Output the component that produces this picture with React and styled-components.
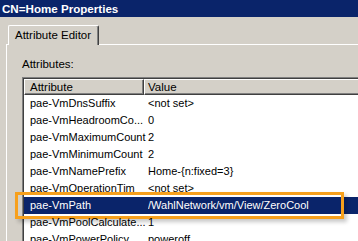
import React from "react";
import styled, { createGlobalStyle } from "styled-components";

const Global = createGlobalStyle`
  html, body {
    margin: 0;
    padding: 0;
    width: 358px;
    height: 241px;
    overflow: hidden;
    background: #d4d0c8;
  }
  * { box-sizing: border-box; }
`;

const Window = styled.div`
  width: 358px;
  height: 241px;
  overflow: hidden;
  background: #d4d0c8;
  font-family: "Liberation Sans", Arial, sans-serif;
  font-size: 11.5px;
  color: #000;
`;

const TitleBar = styled.div`
  height: 17px;
  background: #0a246a;
  color: #fff;
  font-weight: bold;
  font-size: 11.6px;
  line-height: 17px;
  padding-left: 2px;
  white-space: nowrap;
`;

const Body = styled.div`
  padding-top: 8px;
  padding-left: 6px;
`;

const TabStrip = styled.div`
  display: flex;
  padding-left: 2px;
`;

const Tab = styled.div`
  height: 20px;
  border-top: 1px solid #fff;
  border-left: 1px solid #fff;
  border-right: 1px solid #404040;
  box-shadow: inset -1px 0 0 #808080;
  border-top-left-radius: 2px;
  border-top-right-radius: 2px;
  padding: 0 7px 0 6px;
  line-height: 19px;
  white-space: nowrap;
  margin-bottom: -1px;
  background: #d4d0c8;
  position: relative;
  z-index: 1;
`;

const Panel = styled.div`
  width: 420px;
  height: 220px;
  border-top: 1px solid #fff;
  border-left: 1px solid #fff;
  padding: 13px 0 0 15px;
`;

const Label = styled.div`
  line-height: 13px;
  height: 13px;
  margin-bottom: 6px;
`;

const List = styled.div`
  border-top: 1px solid #808080;
  border-left: 1px solid #808080;
  box-shadow: inset 1px 1px 0 #404040;
  padding: 1px 0 0 1px;
  background: #fff;
  height: 200px;
  font-size: 11px;
`;

const Header = styled.div`
  display: flex;
  height: 16px;
  font-size: 11.5px;
`;

const HeaderCell = styled.div`
  width: ${(p) => p.$w};
  flex: ${(p) => (p.$grow ? "1" : "none")};
  background: #d4d0c8;
  border-top: 1px solid #fff;
  border-left: 1px solid #fff;
  border-bottom: 1px solid #404040;
  border-right: 1px solid #404040;
  box-shadow: inset -1px -1px 0 #808080;
  padding-left: ${(p) => p.$pad};
  line-height: 14px;
  white-space: nowrap;
`;

const Row = styled.div`
  position: relative;
  display: grid;
  grid-template-columns: 118px 1fr;
  height: 17px;
  line-height: 17px;
  padding-left: 6px;
  white-space: nowrap;
  background: ${(p) => (p.$selected ? "#0a246a" : "transparent")};
  color: ${(p) => (p.$selected ? "#fff" : "#000")};
`;

const Cell = styled.span`
  overflow: hidden;
`;

const Callout = styled.div`
  position: absolute;
  left: -9px;
  top: -5px;
  width: 329px;
  height: 27px;
  border: 3px solid #f7a01c;
  box-shadow: 3px 3px 4px rgba(0, 0, 0, 0.22);
  pointer-events: none;
`;

const rows = [
  ["pae-VmDnsSuffix", "<not set>"],
  ["pae-VmHeadroomCo...", "0"],
  ["pae-VmMaximumCount", "2"],
  ["pae-VmMinimumCount", "2"],
  ["pae-VmNamePrefix", "Home-{n:fixed=3}"],
  ["pae-VmOperationTim", "<not set>"],
  ["pae-VmPath", "/WahlNetwork/vm/View/ZeroCool", true],
  ["pae-VmPoolCalculate...", "1"],
  ["pae-VmPowerPolicy", "poweroff"],
];

export default function App() {
  return (
    <Window>
      <Global />
      <TitleBar>CN=Home Properties</TitleBar>
      <Body>
        <TabStrip>
          <Tab>Attribute Editor</Tab>
        </TabStrip>
        <Panel>
          <Label>Attributes:</Label>
          <List>
            <Header>
              <HeaderCell $w="120px" $pad="5px">Attribute</HeaderCell>
              <HeaderCell $grow $pad="3px">Value</HeaderCell>
            </Header>
            {rows.map(([a, v, sel]) => (
              <Row key={a} $selected={sel}>
                <Cell>{a}</Cell>
                <Cell>{v}</Cell>
                {sel && <Callout />}
              </Row>
            ))}
          </List>
        </Panel>
      </Body>
    </Window>
  );
}
